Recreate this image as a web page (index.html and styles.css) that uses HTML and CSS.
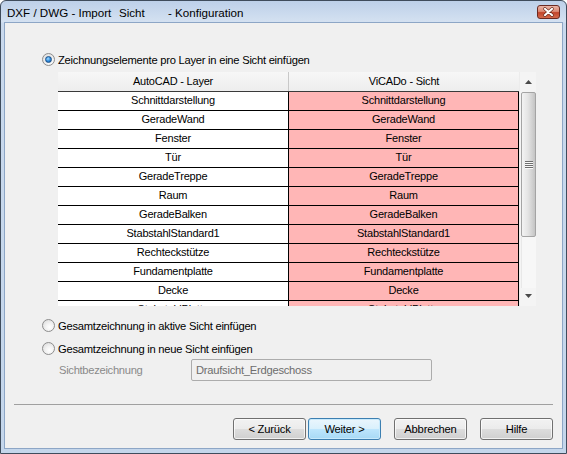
FILE: index.html
```html
<!DOCTYPE html>
<html>
<head>
<meta charset="utf-8">
<link rel="stylesheet" href="styles.css">
</head>
<body>
<div class="window">
  <div class="titlebar">
    <span class="title t1">DXF / DWG - Import</span>
    <span class="title t2">Sicht</span>
    <span class="title t3">- Konfiguration</span>
    <div class="close">
      <svg width="23" height="14" viewBox="0 0 23 14">
        <path d="M7.5 3.5 L15.5 10.5 M15.5 3.5 L7.5 10.5" stroke="#6a2a1c" stroke-width="3.6" stroke-linecap="round" fill="none"/>
        <path d="M7.5 3.5 L15.5 10.5 M15.5 3.5 L7.5 10.5" stroke="#ffffff" stroke-width="2.2" stroke-linecap="round" fill="none"/>
      </svg>
    </div>
  </div>
  <div class="client">
    <div class="opt opt1"><span class="radio checked"></span><span>Zeichnungselemente pro Layer in eine Sicht einfügen</span></div>
    <div class="grid">
      <div class="grid-body">
        <div class="hdr"><div class="h1">AutoCAD - Layer</div><div class="h2">ViCADo - Sicht</div></div>
        <div class="row"><div class="c1">Schnittdarstellung</div><div class="c2">Schnittdarstellung</div></div>
        <div class="row"><div class="c1">GeradeWand</div><div class="c2">GeradeWand</div></div>
        <div class="row"><div class="c1">Fenster</div><div class="c2">Fenster</div></div>
        <div class="row"><div class="c1">Tür</div><div class="c2">Tür</div></div>
        <div class="row"><div class="c1">GeradeTreppe</div><div class="c2">GeradeTreppe</div></div>
        <div class="row"><div class="c1">Raum</div><div class="c2">Raum</div></div>
        <div class="row"><div class="c1">GeradeBalken</div><div class="c2">GeradeBalken</div></div>
        <div class="row"><div class="c1">StabstahlStandard1</div><div class="c2">StabstahlStandard1</div></div>
        <div class="row"><div class="c1">Rechteckstütze</div><div class="c2">Rechteckstütze</div></div>
        <div class="row"><div class="c1">Fundamentplatte</div><div class="c2">Fundamentplatte</div></div>
        <div class="row"><div class="c1">Decke</div><div class="c2">Decke</div></div>
        <div class="row"><div class="c1">StabstahlPlatte</div><div class="c2">StabstahlPlatte</div></div>
      </div>
      <div class="scrollbar">
        <div class="sb-btn"><svg width="7" height="4" viewBox="0 0 7 4"><path d="M0 4 L3.5 0 L7 4 Z" fill="#4a4a4a"/></svg></div>
        <div class="thumb"><span class="grip"></span></div>
        <div class="track"></div>
        <div class="sb-btn down"><svg width="7" height="4" viewBox="0 0 7 4"><path d="M0 0 L7 0 L3.5 4 Z" fill="#4a4a4a"/></svg></div>
      </div>
    </div>
    <div class="opt opt2"><span class="radio"></span><span>Gesamtzeichnung in aktive Sicht einfügen</span></div>
    <div class="opt opt3"><span class="radio"></span><span>Gesamtzeichnung in neue Sicht einfügen</span></div>
    <div class="field">
      <span class="flabel">Sichtbezeichnung</span>
      <div class="input">Draufsicht_Erdgeschoss</div>
    </div>
    <div class="sep"></div>
    <div class="buttons">
      <div class="btn">&lt; Zurück</div>
      <div class="btn default">Weiter &gt;</div>
      <div class="btn gap">Abbrechen</div>
      <div class="btn gap">Hilfe</div>
    </div>
  </div>
</div>
</body>
</html>
```
FILE: styles.css
```css
html, body {
  margin: 0;
  padding: 0;
  background: #ffffff;
}
body {
  font-family: "Liberation Sans", Arial, sans-serif;
  font-size: 11px;
  color: #000;
}
.window {
  width: 567px;
  height: 454px;
  box-sizing: border-box;
  border: 1px solid #3f4c5c;
  border-radius: 6px 6px 0 0;
  background: linear-gradient(#bdd0e9 0px, #d4e1f1 21px, #c9d9ed 22px, #c4d6eb 100%);
  padding: 0 3px 4px 3px;
  display: flex;
  flex-direction: column;
  overflow: hidden;
}
.titlebar {
  height: 21px;
  display: flex;
  align-items: flex-start;
  flex: none;
}
.title {
  font-size: 11.6px;
  line-height: 14px;
  margin-top: 5px;
  white-space: nowrap;
}
.t1 { padding-left: 3px; width: 112px; flex: none; }
.t2 { width: 49px; flex: none; }
.t3 { flex: none; }
.close {
  margin-left: auto;
  margin-right: 3px;
  margin-top: 4px;
  width: 23px;
  height: 14px;
  box-sizing: border-box;
  border: 1px solid #6b2a22;
  border-radius: 3px;
  background: linear-gradient(#eab3a6 0%, #dc8a74 45%, #c2452b 55%, #d46a4c 100%);
  display: flex;
  align-items: center;
  justify-content: center;
  overflow: hidden;
}
.close svg { display: block; margin-top: -1px; }
.client {
  flex: 1;
  background: #f0f0f0;
  border: 1px solid #8da6c6;
  padding-left: 37px;
  display: flex;
  flex-direction: column;
  min-height: 0;
}
.opt {
  display: flex;
  align-items: center;
  height: 15px;
  font-size: 11.2px;
  letter-spacing: -0.25px;
  white-space: nowrap;
}
.opt1 { margin-top: 29px; }
.opt2 { margin-top: 12px; }
.opt3 { margin-top: 8px; }
.radio {
  width: 13px;
  height: 13px;
  box-sizing: border-box;
  border-radius: 50%;
  border: 1px solid #8d8d8d;
  background: radial-gradient(circle at 60% 65%, #ffffff 0%, #f2f2f2 40%, #d6d6d6 100%);
  margin-right: 3px;
  position: relative;
  flex: none;
}
.radio.checked::after {
  content: "";
  position: absolute;
  left: 2px;
  top: 2px;
  width: 7px;
  height: 7px;
  box-sizing: border-box;
  border-radius: 50%;
  border: 1px solid #1c4f86;
  background: radial-gradient(circle at 40% 35%, #a6dcff 0%, #2f8ee0 50%, #124f95 100%);
}
.grid {
  margin-left: 16px;
  margin-top: 5px;
  width: 478px;
  height: 234px;
  display: flex;
  flex: none;
  background: #ffffff;
}
.grid-body {
  width: 461px;
  height: 234px;
  overflow: hidden;
  letter-spacing: -0.2px;
}
.hdr {
  display: flex;
  height: 19px;
  border-bottom: 1px solid #3a3a3a;
  background: linear-gradient(#f7f7f7, #ededed);
}
.hdr > div {
  line-height: 19px;
  text-align: center;
  white-space: nowrap;
}
.h1 { width: 230px; border-right: 1px solid #c8c8c8; }
.h2 { width: 230px; }
.row {
  display: flex;
  height: 18px;
  border-bottom: 1px solid #000;
}
.row > div {
  line-height: 17px;
  text-align: center;
  white-space: nowrap;
}
.c1 {
  width: 230px;
  background: #ffffff;
  border-right: 1px solid #000;
}
.c2 {
  width: 229px;
  background: #ffb6b6;
  border-right: 1px solid #000;
}
.scrollbar {
  width: 17px;
  height: 234px;
  background: #f4f4f4;
  display: flex;
  flex-direction: column;
  align-items: center;
  box-sizing: border-box;
  border-left: 1px solid #ececec;
}
.sb-btn {
  height: 20px;
  width: 15px;
  display: flex;
  align-items: center;
  justify-content: center;
  flex: none;
}
.sb-btn svg { display: block; }
.sb-btn.down { height: 18px; align-items: flex-start; padding-top: 6px; box-sizing: border-box; }
.thumb {
  width: 15px;
  height: 145px;
  box-sizing: border-box;
  border: 1px solid #a4a4a4;
  border-radius: 2px;
  background: linear-gradient(to right, #f3f3f3 0%, #e4e4e4 45%, #d3d3d3 75%, #c4c4c4 100%);
  flex: none;
  position: relative;
}
.grip {
  position: absolute;
  left: 3px;
  top: 68px;
  width: 8px;
  height: 8px;
  background: repeating-linear-gradient(#6e6e6e 0 1px, #f8f8f8 1px 2px);
}
.track {
  flex: 1;
  width: 15px;
  background: #f7f7f7;
  border-left: 1px solid #e8e8e8;
  box-sizing: border-box;
}
.field {
  margin-top: 3px;
  display: flex;
  align-items: center;
  height: 22px;
  flex: none;
}
.flabel {
  margin-left: 17px;
  width: 132px;
  color: #8a8a8a;
  font-size: 11.2px;
  letter-spacing: -0.3px;
}
.input {
  width: 241px;
  height: 22px;
  box-sizing: border-box;
  border: 1px solid #acacac;
  border-radius: 2px;
  background: #f0f0f0;
  color: #6d6d6d;
  font-size: 11.2px;
  letter-spacing: -0.25px;
  line-height: 20px;
  padding-left: 4px;
}
.sep {
  margin-top: 23px;
  margin-left: -28px;
  width: 539px;
  height: 1px;
  background: #a0a0a0;
  flex: none;
}
.buttons {
  margin-top: 13px;
  display: flex;
  justify-content: flex-end;
  margin-right: 9px;
}
.btn {
  width: 73px;
  height: 22px;
  box-sizing: border-box;
  border: 1px solid #707070;
  border-radius: 3px;
  background: linear-gradient(#f2f2f2 0%, #ebebeb 50%, #dddddd 50%, #cfcfcf 100%);
  box-shadow: inset 0 0 0 1px rgba(255,255,255,0.7);
  text-align: center;
  line-height: 20px;
  font-size: 11.2px;
  letter-spacing: -0.2px;
  margin-left: 2px;
}
.btn.gap { margin-left: 13px; }
.btn.default {
  border-color: #3c7fb1;
  background: linear-gradient(#eaf6fd 0%, #d9f0fc 50%, #bee6fd 50%, #a7d9f5 100%);
  box-shadow: inset 0 0 0 1px #c8eafc;
}
```
